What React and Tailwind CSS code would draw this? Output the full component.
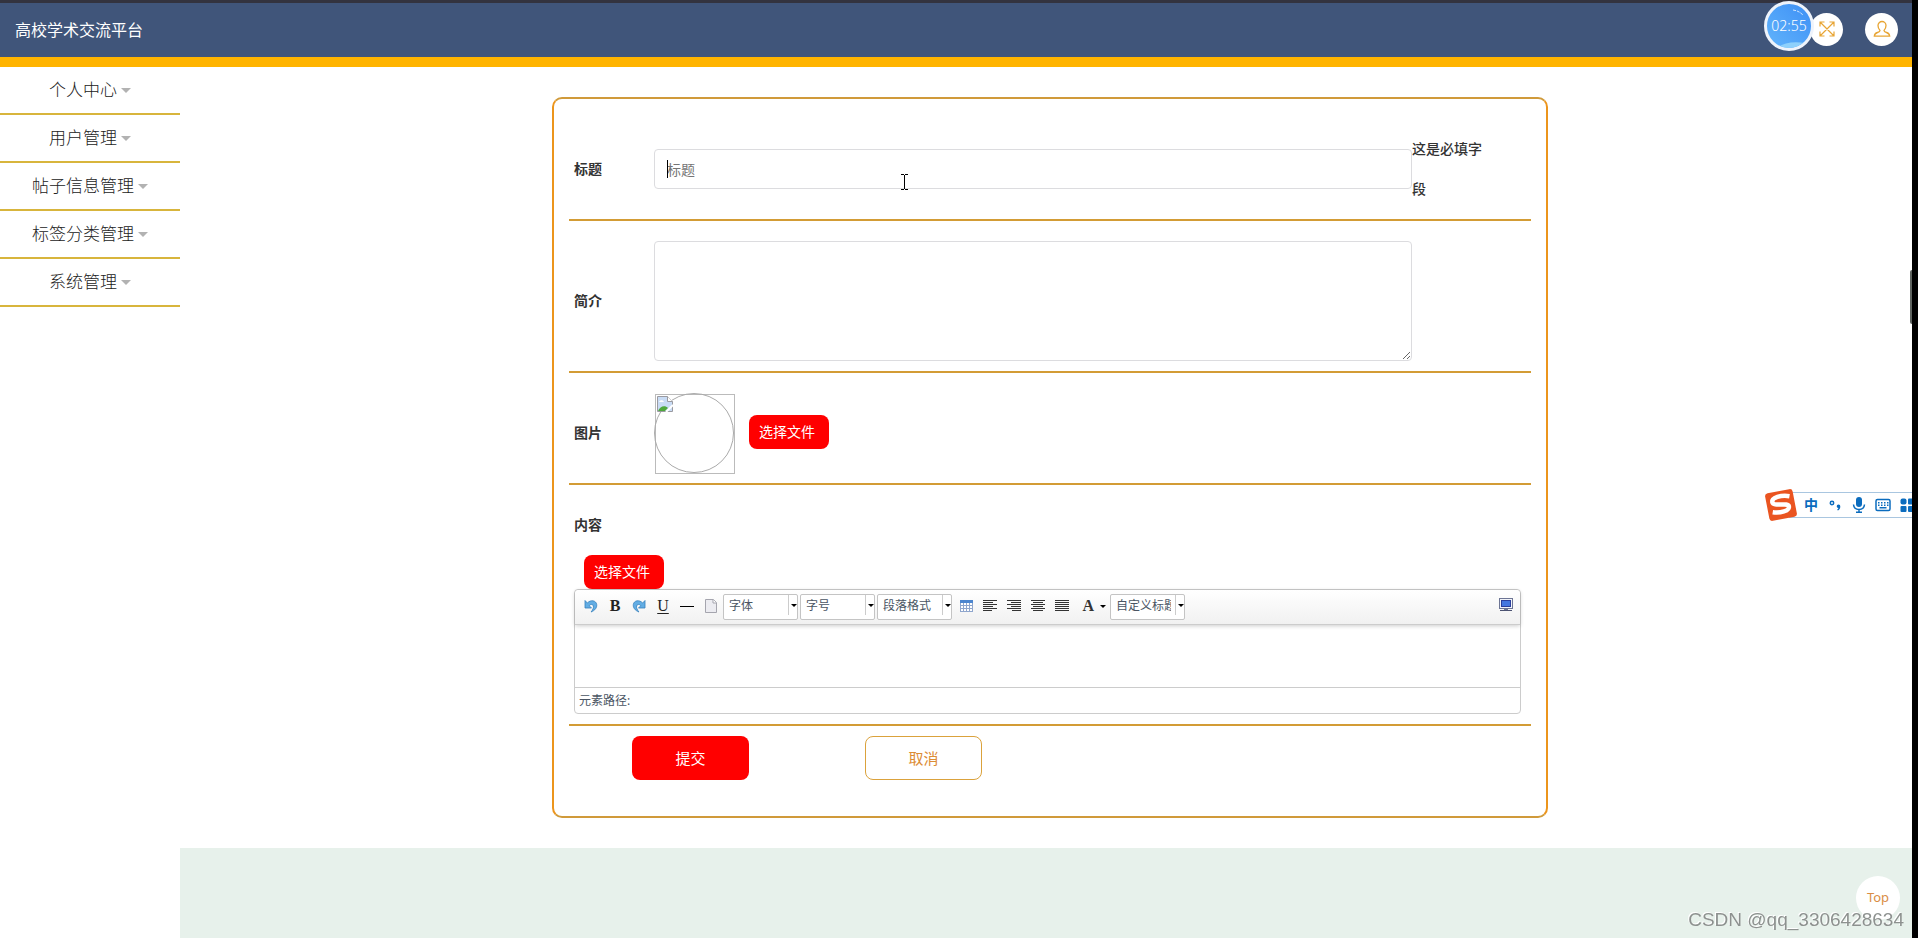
import React from 'react';

const menuItems = ['个人中心', '用户管理', '帖子信息管理', '标签分类管理', '系统管理'];

const fileButton =
  'block h-[34px] w-20 rounded-lg bg-[#ff0000] pl-2.5 text-left text-sm text-white cursor-pointer';

const rowClass = 'border-b-2 border-[#d39c35] px-[5px] pt-5 pb-2.5';

function Header() {
  return (
    <header className="relative flex h-[67px] items-center justify-between border-t-[3px] border-b-[10px] border-t-[#33333f] border-b-[#ffb400] bg-[#40557a] pl-[15px] pr-3.5">
      <h1 className="text-base text-white">高校学术交流平台</h1>
      <div className="flex items-center gap-[22px] pb-0.5">
        <button aria-label="全屏" className="flex size-[33px] items-center justify-center rounded-full bg-white">
          <svg viewBox="0 0 16 16" className="size-4" fill="none" stroke="#e8a534" strokeWidth="1.2">
            <path d="M1.5 1.5l13 13M14.5 1.5l-13 13M1 5.5V1h4.500M10.500 1H15v4.500M15 10.500V15h-4.500M5.500 15H1v-4.500" />
          </svg>
        </button>
        <button aria-label="用户" className="flex size-[33px] items-center justify-center rounded-full bg-white">
          <svg viewBox="0 0 18 18" className="size-[18px]" fill="none" stroke="#e8a534" strokeWidth="1.3">
            <path d="M7 10.500C5.500 9 5 7.500 5 5.500a4 4 0 0 1 8 0c0 2-.5 3.500-2 5 0 1.200.6 1.500 2.500 2 2.200.6 3 1.500 3.200 3.700H1.300C1.500 14 2.300 13.100 4.500 12.500 6.400 12 7 11.700 7 10.500z" />
          </svg>
        </button>
      </div>

      {/* Recorder timer floating over the header */}
      <div className="absolute -top-0.5 right-[98px] flex size-[50px] items-center justify-center overflow-hidden rounded-full border-[3px] border-[#eef3fb] bg-gradient-to-bl from-[#3d8ff5] to-[#62b4fb]">
        <svg viewBox="0 0 44 44" className="absolute inset-0 size-full" fill="none">
          <path d="M10 44c6-5 16-7 28-5v5z" fill="#8ed0fb" />
          <path d="M26 6c4 .5 7 2 10 5" stroke="#cfe6ff" strokeDasharray="3 1" />
        </svg>
        <span className="relative text-sm font-light text-white">02:55</span>
      </div>
    </header>
  );
}

function Sidebar() {
  return (
    <nav className="w-[180px] shrink-0 bg-white">
      <ul>
        {menuItems.map((label) => (
          <li key={label} className="border-b-2 border-[#d8b53c]">
            <a href="#" className="flex h-[46px] items-center justify-center gap-1 text-[17px] font-light text-[#222]">
              {label}
              <span className="border-x-[5px] border-t-[5px] border-x-transparent border-t-[#b2b2b2]"></span>
            </a>
          </li>
        ))}
      </ul>
    </nav>
  );
}

function ToolButton({ label, children }) {
  return (
    <button
      type="button"
      aria-label={label}
      className="flex size-6 shrink-0 items-center justify-center font-['Liberation_Serif',serif] text-base text-[#222]"
    >
      {children}
    </button>
  );
}

function Combo({ label }) {
  return (
    <div className="relative mr-0.5 flex h-[26px] w-[75px] shrink-0 rounded-xs border border-[#c4c4c4] bg-white">
      <select
        aria-label={label}
        className="h-[22px] w-[60px] appearance-none overflow-hidden pl-[5px] text-xs whitespace-nowrap text-[#4a5563] outline-none"
      >
        <option>{label}</option>
      </select>
      <span className="ml-1 h-5 border-l border-[#ccc]"></span>
      <span className="pointer-events-none absolute top-[9px] right-0 border-x-[3px] border-t-[3px] border-x-transparent border-t-black"></span>
    </div>
  );
}

const alignLines = {
  左对齐: [14, 10, 14, 10, 14, 9],
  右对齐: [14, 10, 14, 10, 14, 9],
  居中对齐: [14, 10, 14, 10, 14, 10],
  两端对齐: [14, 14, 14, 14, 14, 14],
};

function AlignIcon({ type }) {
  return (
    <svg viewBox="0 0 14 12" className="h-3 w-3.5" fill="#333" shapeRendering="crispEdges">
      {alignLines[type].map((w, i) => {
        const x = type === '右对齐' ? 14 - w : type === '居中对齐' ? (14 - w) / 2 : 0;
        return <rect key={i} x={x} y={i * 2} width={w} height="1" />;
      })}
    </svg>
  );
}

function UndoIcon({ flip }) {
  return (
    <svg viewBox="0 0 14 14" className={flip ? 'size-3.5 -scale-x-100' : 'size-3.5'}>
      <path
        d="M1 1.500v7.500h6.500L5.200 6.700C6.600 4.900 9 5 9.400 7c.4 1.900-.6 3.700-2.300 6 3.900-1.600 6-4.300 5.600-7.500C12.100 1.300 6.500.4 3.400 4z"
        fill="#62ade4"
        stroke="#3580bd"
        strokeWidth="0.8"
      />
    </svg>
  );
}

function Editor() {
  return (
    <div className="rounded border border-[#ccc] bg-white">
      <div className="flex h-[35px] items-start rounded-t border-b border-[#ccc] bg-gradient-to-b from-white to-[#f1f1f1] pr-[7px] pl-1 shadow-[0_1px_4px_rgba(0,0,0,0.2)]">
        <div className="flex min-w-0 flex-1 flex-wrap items-start pt-1">
          <ToolButton label="撤销"><UndoIcon /></ToolButton>
          <ToolButton label="加粗"><b>B</b></ToolButton>
          <ToolButton label="重做"><UndoIcon flip /></ToolButton>
          <ToolButton label="下划线"><span className="underline underline-offset-2">U</span></ToolButton>
          <ToolButton label="分隔线"><span className="h-px w-3.5 bg-black"></span></ToolButton>
          <ToolButton label="新建">
            <svg viewBox="0 0 12 14" className="h-3.5 w-3">
              <path d="M.5.500h8l3 3v10H.500z" fill="#ececf1" stroke="#a5a5ae" />
              <path d="M8 .500v3.500h3.500" fill="#fff" stroke="#a5a5ae" />
            </svg>
          </ToolButton>
          <Combo label="字体" />
          <Combo label="字号" />
          <Combo label="段落格式" />
          <ToolButton label="表格">
            <svg viewBox="0 0 13 12" className="h-3 w-[13px]" shapeRendering="crispEdges">
              <rect width="13" height="12" fill="#8fa6cd" />
              <rect width="13" height="3" fill="#4d86cf" />
              {[1, 4, 7, 10].map((x) =>
                [3, 6, 9].map((y) => <rect key={`${x}-${y}`} x={x} y={y} width="2" height="2" fill="#fff" />)
              )}
            </svg>
          </ToolButton>
          {Object.keys(alignLines).map((type) => (
            <ToolButton key={type} label={type}>
              <AlignIcon type={type} />
            </ToolButton>
          ))}
          <button
            type="button"
            aria-label="字体颜色"
            className="mr-1 flex h-6 w-8 items-center justify-end gap-1.5 font-['Liberation_Serif',serif] text-base font-bold text-[#333]"
          >
            A
            <span className="border-x-[3px] border-t-[3px] border-x-transparent border-t-black"></span>
          </button>
          <Combo label="自定义标题" />
        </div>
        <button type="button" aria-label="全屏编辑" className="mt-2">
          <svg viewBox="0 0 14 13" className="h-[13px] w-3.5" shapeRendering="crispEdges">
            <rect width="14" height="11" fill="#6d7594" />
            <rect x="1" y="1" width="12" height="9" fill="#f2f4fa" />
            <rect x="2" y="2" width="10" height="7" fill="#2a3f9c" />
            <rect x="3" y="3" width="8" height="5" fill="#4477e0" />
            <rect x="5" y="11" width="4" height="1" fill="#6d7594" />
            <rect x="1" y="12" width="12" height="1" fill="#4c5372" />
          </svg>
        </button>
      </div>
      <textarea aria-label="内容" className="block h-[62px] w-full resize-none p-2 text-sm outline-none" />
      <div className="h-[26px] border-t border-[#ccc] pl-1 text-xs leading-[26px] text-[#4a5563]">元素路径:</div>
    </div>
  );
}

function PostForm() {
  return (
    <form className="mx-auto my-[30px] w-full max-w-[996px] rounded-[10px] border-2 border-x-[#ec951c] border-y-[#d09a3a] px-[15px] pt-2.5 pb-9 text-sm text-[#333]">
      <div className={`${rowClass} flex items-center`}>
        <label htmlFor="title" className="w-20 font-bold">标题</label>
        <div className="relative flex-1">
          <input
            id="title"
            type="text"
            placeholder="标题"
            className="block h-10 w-full rounded border border-[#dcdcdf] px-3 outline-none placeholder:text-[#757575]"
          />
          <span className="absolute top-[11px] left-[13px] h-[18px] w-px bg-black"></span>
          <svg viewBox="0 0 7 16" className="absolute top-[25px] left-[247px] h-4 w-[7px]" stroke="#000" fill="none" shapeRendering="crispEdges">
            <path d="M0 .500h3M4 .500h3M3.500 1v14M0 15.500h3M4 15.500h3" />
          </svg>
        </div>
        <p className="mr-[34px] w-20 font-medium leading-10">这是必填字段</p>
      </div>

      <div className={`${rowClass} flex items-center`}>
        <label htmlFor="intro" className="w-20 font-bold">简介</label>
        <textarea id="intro" className="mr-[114px] block h-[120px] flex-1 rounded border border-[#dcdcdf] p-3 outline-none" />
      </div>

      <div className={`${rowClass} flex items-center`}>
        <span className="w-20 font-bold">图片</span>
        <svg viewBox="0 0 82 82" className="-mr-0.5 -mb-0.5 size-[82px]" role="img" aria-label="图片" fill="none">
          <rect x="1.500" y="1.500" width="79" height="79" stroke="#bbb" />
          <circle cx="40" cy="40" r="39.500" stroke="#aaa" />
          <path d="M3.500 3.500h10l5 5v10h-15z" fill="#c9dcf5" stroke="#9a9aa0" />
          <path d="M13.500 3.500v5h5" fill="#fff" stroke="#9a9aa0" />
          <path d="M5 9c1-2.500 4-2.500 5 0z" fill="#fff" />
          <path d="M4 18c2-5 7-6 10-3l-3 3z" fill="#4fa83d" />
          <path d="M12 19l7-7" stroke="#fff" strokeWidth="2" />
        </svg>
        <button type="button" className={`${fileButton} mb-0.5 ml-[15px]`}>选择文件</button>
      </div>

      <div className={rowClass}>
        <h2 className="font-bold leading-10">内容</h2>
        <button type="button" className={`${fileButton} mt-2.5 ml-2.5`}>选择文件</button>
        <div className="mr-[5px]">
          <Editor />
        </div>
      </div>

      <div className="flex gap-[116px] pt-2.5 pl-[63px] text-[15px]">
        <button type="submit" className="h-11 w-[117px] rounded-lg bg-[#ff0000] pt-0.5 text-white">提交</button>
        <button type="button" className="h-11 w-[117px] rounded-lg border border-[#dba23c] pt-0.5 text-[#dc8c35]">取消</button>
      </div>
    </form>
  );
}

function ImeBar() {
  return (
    <div className="fixed top-[489px] right-1.5 flex w-[147px] items-center overflow-hidden">
      <svg viewBox="0 0 32 32" className="relative z-10 size-8 shrink-0">
        <g transform="rotate(-11 16 16)">
          <rect x="2" y="2" width="28" height="28" rx="3" fill="#ea5420" />
          <path
            d="M26 9C18 6 8 7 8 11.500c0 5.500 15.500 2.500 15.500 7.500 0 4.500-10 5-17 2.500"
            fill="none"
            stroke="#fff"
            strokeWidth="4.5"
          />
        </g>
      </svg>
      <div className="-ml-2 flex h-[26px] w-[150px] shrink-0 items-center gap-2 border-y border-[#a9c6e0] bg-white pl-3.5 text-[#0b6cbe]">
        <span className="w-4 text-center text-sm leading-4 font-bold">中</span>
        <svg viewBox="0 0 16 16" className="size-4 shrink-0">
          <circle cx="5" cy="6" r="1.700" fill="none" stroke="currentColor" strokeWidth="1.500" />
          <path d="M11.500 7.500a1.800 1.800 0 0 1 1.800 2c0 2-1 3.500-2.500 4l-.6-1c.8-.4 1.200-.9 1.200-1.500a1.750 1.750 0 0 1 .1-3.500z" fill="currentColor" />
        </svg>
        <svg viewBox="0 0 16 16" className="size-4 shrink-0" fill="none" stroke="currentColor" strokeWidth="1.500">
          <rect x="5" y="0" width="6" height="10" rx="3" fill="currentColor" stroke="none" />
          <path d="M2.500 7.500c.5 6.500 10.500 6.500 11 0M8 12v3M5 15.200h6" />
        </svg>
        <svg viewBox="0 0 16 16" className="size-4 shrink-0">
          <rect x="1" y="2.500" width="14" height="11" rx="1.500" fill="none" stroke="currentColor" strokeWidth="1.500" />
          {[3, 6, 9, 12].map((x) => (
            <path key={x} d={`M${x} 5h1.500v1.500h-1.500zM${x} 7.500h1.500v1.500h-1.500z`} fill="currentColor" />
          ))}
          <path d="M4.500 10h7v1.500h-7z" fill="currentColor" />
        </svg>
        <svg viewBox="0 0 16 16" className="size-4 shrink-0" fill="currentColor">
          <rect x="1.500" y="1.500" width="6" height="6" rx="2" />
          <rect x="9" y="1.500" width="6" height="6" rx="1" />
          <rect x="1.500" y="9" width="6" height="6" rx="1" />
          <rect x="9" y="9" width="6" height="6" rx="1" />
        </svg>
      </div>
    </div>
  );
}

export default function App() {
  return (
    <div className="flex min-h-screen bg-white font-['Noto_Sans','Noto_Sans_CJK_SC',sans-serif]">
      <div className="flex min-w-0 flex-1 flex-col">
        <Header />
        <div className="flex flex-1">
          <Sidebar />
          <div className="flex min-w-0 flex-1 flex-col">
            <main className="pl-2">
              <PostForm />
            </main>
            <footer className="flex-1 bg-[#e7f1eb]"></footer>
          </div>
        </div>
      </div>
      <div className="w-1.5 shrink-0 bg-black"></div>

      {/* Floating bits pinned to the window */}
      <div className="fixed top-[270px] right-1.5 h-[54px] w-0.5 rounded-l bg-[#5f6460]"></div>
      <ImeBar />
      <a
        href="#"
        className="fixed right-[18px] bottom-[18px] flex size-11 items-center justify-center rounded-full bg-white text-[13px] text-[#d98d45]"
      >
        Top
      </a>
      <div className="pointer-events-none fixed right-3.5 bottom-1.5 font-['Liberation_Sans',sans-serif] text-[19px] leading-6 text-[#8d918f] [text-shadow:-1px_-1px_0_#fff]">
        CSDN @qq_3306428634
      </div>
    </div>
  );
}
